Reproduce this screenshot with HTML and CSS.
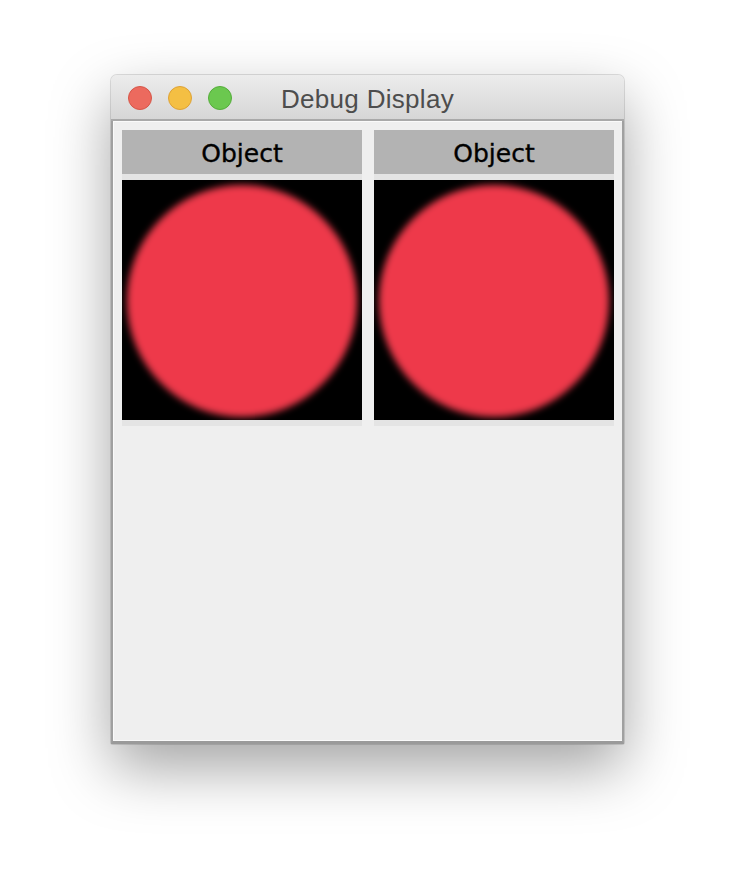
FILE: index.html
```html
<!DOCTYPE html>
<html>
<head>
<meta charset="utf-8">
<link rel="stylesheet" href="styles.css">
</head>
<body>
<div class="window">
  <div class="titlebar">
    <div class="lights">
      <span class="light red"></span>
      <span class="light yellow"></span>
      <span class="light green"></span>
    </div>
    <div class="title">Debug Display</div>
  </div>
  <div class="frame">
    <div class="content">
      <div class="grid">
        <div class="cell">
          <div class="header">Object</div>
          <div class="image"><div class="circle"></div></div>
        </div>
        <div class="cell">
          <div class="header">Object</div>
          <div class="image"><div class="circle"></div></div>
        </div>
      </div>
    </div>
  </div>
</div>
</body>
</html>
```

FILE: styles.css
```css
html, body {
  margin: 0;
  padding: 0;
  background: #ffffff;
}
body {
  width: 736px;
  height: 892px;
  overflow: hidden;
}
.window {
  margin: 75px 0 0 111px;
  width: 513px;
  height: 669px;
  border-radius: 6px 6px 2px 2px;
  box-shadow: 0 24px 60px rgba(0, 0, 0, 0.36), 0 0 0 1px rgba(0, 0, 0, 0.12);
  display: flex;
  flex-direction: column;
  background: #efefef;
}
.titlebar {
  height: 44px;
  border-radius: 6px 6px 0 0;
  background: linear-gradient(#ececec, #d6d6d6);
  border-bottom: 2px solid #a9a9a9;
  position: relative;
  display: flex;
  align-items: center;
  justify-content: center;
  flex-shrink: 0;
}
.lights {
  position: absolute;
  left: 17px;
  top: 11px;
  display: flex;
  gap: 16px;
}
.light {
  width: 22px;
  height: 22px;
  border-radius: 50%;
  display: block;
}
.red { background: #ec6a5e; border: 1px solid #d65648; }
.yellow { background: #f4bf43; border: 1px solid #dea236; }
.green { background: #6bc84f; border: 1px solid #55ad3b; }
.title {
  font-family: "Liberation Sans", Arial, sans-serif;
  font-size: 26px;
  letter-spacing: 0.3px;
  color: #4d4d4d;
  padding-top: 4px;
}
.frame {
  flex: 1;
  border-left: 2px solid #a0a0a0;
  border-right: 2px solid #a0a0a0;
  border-bottom: 3px solid #9a9a9a;
}
.content {
  height: 100%;
  box-sizing: border-box;
  border-left: 1px solid #fafafa;
  border-top: 1px solid #fafafa;
  border-bottom: 1px solid #fafafa;
  background: #efefef;
  padding: 8px 6px 0 8px;
}
.grid {
  display: grid;
  grid-template-columns: 240px 240px;
  gap: 12px;
}
.cell {
  background: #e4e4e4;
  padding-bottom: 6px;
}
.header {
  height: 44px;
  box-sizing: border-box;
  padding-top: 3px;
  background: #b3b3b3;
  display: flex;
  align-items: center;
  justify-content: center;
  font-family: "DejaVu Sans", "Liberation Sans", sans-serif;
  font-size: 25px;
  -webkit-text-stroke: 0.35px #000;
  color: #000;
  margin-bottom: 6px;
}
.image {
  width: 240px;
  height: 240px;
  background: #000;
  overflow: hidden;
  display: flex;
  align-items: center;
  justify-content: center;
}
.circle {
  width: 230px;
  height: 232px;
  border-radius: 50%;
  background: #ee394a;
  filter: blur(3.5px);
  margin-top: 2px;
}
```
